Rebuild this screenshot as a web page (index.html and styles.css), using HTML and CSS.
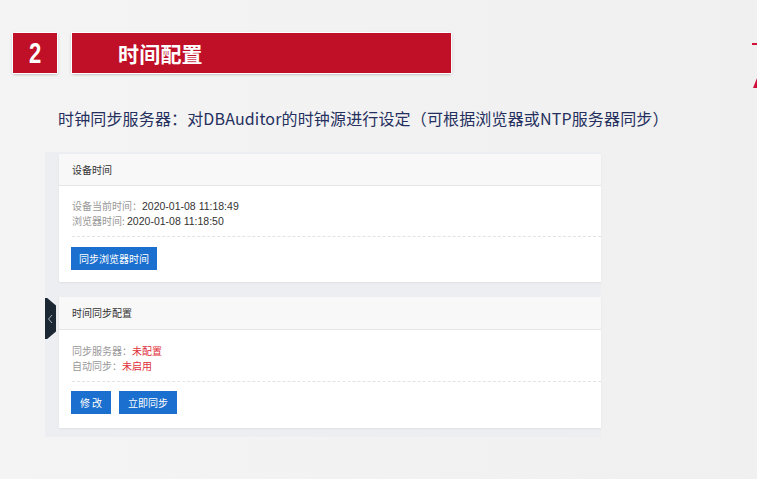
FILE: index.html
```html
<!DOCTYPE html>
<html lang="zh-CN">
<head>
<meta charset="utf-8">
<title>时间配置</title>
<link rel="stylesheet" href="styles.css">
</head>
<body>
<div class="slide">
  <div class="deco">
    <svg width="8" height="60" viewBox="0 0 8 60"><rect x="3" y="0" width="5" height="2" fill="#d0103a"/><polygon points="8,35 8,45 4,45" fill="#d0103a"/></svg>
  </div>
  <header class="heading">
    <div class="num"><span class="num-text">2</span></div>
    <div class="title-bar"><span class="title">时间配置</span></div>
  </header>
  <p class="subtitle">时钟同步服务器：对DBAuditor的时钟源进行设定（可根据浏览器或NTP服务器同步）</p>
  <div class="app">
    <div class="tab"><svg width="6" height="10" viewBox="0 0 6 10"><polyline points="5,1 1.5,5 5,9" fill="none" stroke="#a9b1b8" stroke-width="1"/></svg></div>
    <section class="card">
      <div class="card-head">设备时间</div>
      <div class="card-body">
        <div class="line"><span class="label">设备当前时间：</span><span class="val">2020-01-08 11:18:49</span></div>
        <div class="line"><span class="label">浏览器时间:</span> <span class="val">2020-01-08 11:18:50</span></div>
      </div>
      <div class="card-actions">
        <button class="btn">同步浏览器时间</button>
      </div>
    </section>
    <section class="card card-sync">
      <div class="card-head">时间同步配置</div>
      <div class="card-body">
        <div class="line"><span class="label">同步服务器：</span><span class="warn">未配置</span></div>
        <div class="line"><span class="label">自动同步：</span><span class="warn">未启用</span></div>
      </div>
      <div class="card-actions">
        <button class="btn btn-sm">修 改</button>
        <button class="btn btn-md">立即同步</button>
      </div>
    </section>
  </div>
</div>
</body>
</html>
```
FILE: styles.css
```css
* { box-sizing: border-box; }
html, body { margin: 0; padding: 0; }
body {
  width: 757px;
  height: 479px;
  overflow: hidden;
  background: #f3f3f3;
  font-family: "Noto Sans CJK SC", "Noto Sans", sans-serif;
}
.slide {
  position: relative;
  width: 757px;
  height: 479px;
  background: linear-gradient(90deg, #f4f4f4 0%, #f0f0f0 100%);
  padding-top: 33px;
}
.deco {
  position: absolute;
  right: 0;
  top: 43px;
  line-height: 0;
}
.heading {
  display: flex;
  gap: 15px;
  padding-left: 13px;
  height: 40px;
}
.num {
  width: 44px;
  height: 40px;
  background: #c01028;
  color: #fff;
  display: flex;
  align-items: center;
  justify-content: center;
  box-shadow: 0 0 0 1px #fff, 0 1px 3px rgba(0,0,0,.35);
}
.num-text {
  font-family: "Liberation Sans Narrow", "Liberation Sans", sans-serif;
  font-weight: 700;
  font-size: 26px;
  line-height: 1;
  display: inline-block;
  transform: scale(0.85, 1.15);
}
.title-bar {
  width: 379px;
  height: 40px;
  background: #c01028;
  box-shadow: 0 0 0 1px #fff, 0 1px 3px rgba(0,0,0,.35);
  padding-left: 46px;
  display: flex;
  align-items: center;
}
.title {
  color: #fff;
  font-weight: 700;
  font-size: 21px;
  letter-spacing: 0.2px;
}
.subtitle {
  margin: 34px 0 0 58px;
  font-size: 16px;
  line-height: 22px;
  letter-spacing: 0.15px;
  color: #25305e;
  white-space: nowrap;
}
.app {
  position: relative;
  margin: 23px 0 0 45px;
  width: 556px;
  background: #eceef2;
  padding: 2px 0 9px 14px;
  display: flex;
  flex-direction: column;
  gap: 15px;
}
.tab {
  position: absolute;
  left: 0;
  top: 146px;
  width: 11px;
  height: 41px;
  background: #1b2833;
  clip-path: polygon(0 0, 20% 0, 100% 18%, 100% 82%, 20% 100%, 0 100%);
  display: flex;
  align-items: center;
  justify-content: center;
  padding-right: 1px;
}
.card {
  background: #fff;
  box-shadow: 0 1px 2px rgba(0,0,0,.06);
}
.card-head {
  height: 32px;
  background: #f8f8f8;
  border-bottom: 1px solid #e6e6e6;
  padding-left: 13px;
  font-size: 10px;
  line-height: 31px;
  color: #333;
}
.card-body {
  margin: 0 0 0 13px;
  padding: 12px 0 8px;
  border-bottom: 1px dashed #e3e3e3;
}
.line {
  height: 15px;
  font-size: 10px;
  line-height: 15px;
  color: #333;
}
.val {
  font-family: "Liberation Sans", "Noto Sans CJK SC", sans-serif;
  font-size: 10.5px;
  line-height: 10px;
}
.label { color: #999; }
.warn { color: #e0303a; }
.card-actions {
  display: flex;
  gap: 8px;
  padding: 10px 0 12px 12px;
}
.card-sync .card-head { height: 33px; line-height: 32px; }
.card-sync .card-body { padding-top: 13px; }
.card-sync .card-actions { padding: 9px 0 14px 12px; }
.btn {
  height: 23px;
  border: 0;
  background: #1b6fce;
  color: #fff;
  font-family: "Noto Sans CJK SC", "Noto Sans", sans-serif;
  font-size: 10px;
  padding: 0 8px;
  width: 86px;
  cursor: pointer;
}
.btn-sm { width: 40px; padding: 0; }
.btn-md { width: 58px; padding: 0; }
```
